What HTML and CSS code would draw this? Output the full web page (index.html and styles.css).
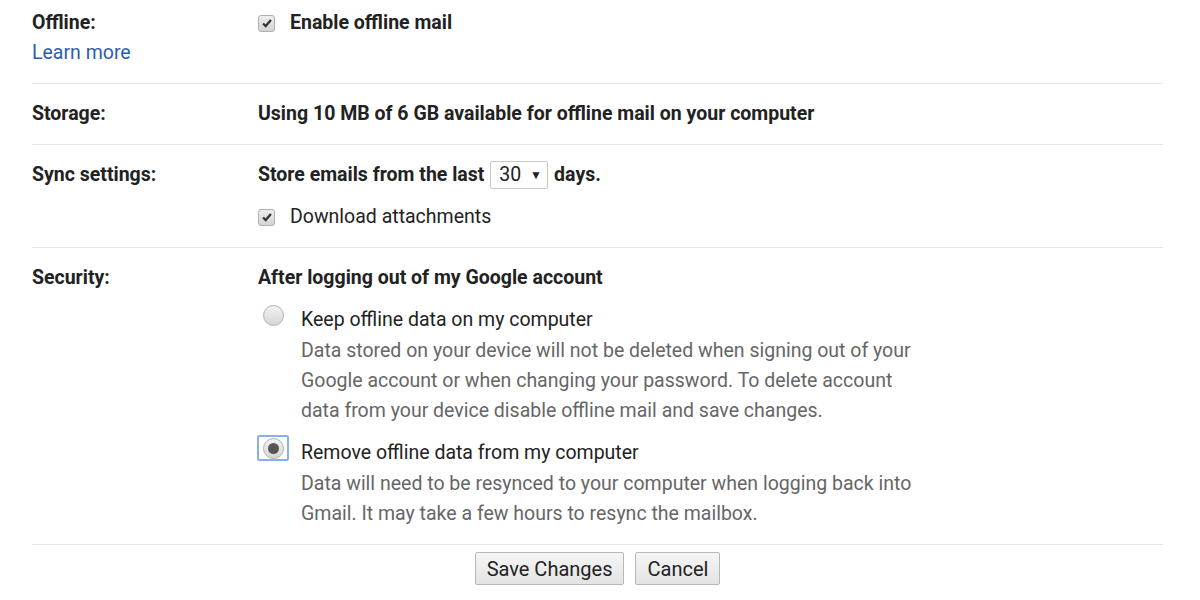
FILE: index.html
```html
<!DOCTYPE html>
<html lang="en">
<head>
    <meta charset="UTF-8">
    <meta name="viewport" content="width=device-width, initial-scale=1.0">
    <title>Offline settings</title>
    <link rel="stylesheet" href="styles.css">
</head>
<body>
    <div id="settings">
        <div class="row first">
            <div class="label">
                <div>Offline:</div>
                <a href="#" class="learn">Learn more</a>
            </div>
            <div class="value">
                <div class="check bold">
                    <span class="box"><svg viewBox="0 0 16 16" width="16" height="16"><path d="M3.5 8.5l3 3L12.5 4.5" fill="none" stroke="#333" stroke-width="2.6"/></svg></span>
                    Enable offline mail
                </div>
            </div>
        </div>

        <div class="row">
            <div class="label">Storage:</div>
            <div class="value bold">Using 10 MB of 6 GB available for offline mail on your computer</div>
        </div>

        <div class="row">
            <div class="label">Sync settings:</div>
            <div class="value">
                <div class="bold">Store emails from the last
                    <span class="select">30 <span class="arrow">&#9660;</span></span>
                    days.</div>
                <div class="check sub">
                    <span class="box"><svg viewBox="0 0 16 16" width="16" height="16"><path d="M3.5 8.5l3 3L12.5 4.5" fill="none" stroke="#333" stroke-width="2.6"/></svg></span>
                    Download attachments
                </div>
            </div>
        </div>

        <div class="row">
            <div class="label">Security:</div>
            <div class="value">
                <div class="bold">After logging out of my Google account</div>
                <div class="radio sub">
                    <span class="ring"><span class="dot"></span></span>
                    <div class="radioText">
                        <div>Keep offline data on my computer</div>
                        <div class="desc">Data stored on your device will not be deleted when signing out of your Google account or when changing your password. To delete account data from your device disable offline mail and save changes.</div>
                    </div>
                </div>
                <div class="radio sub">
                    <span class="ring focus"><span class="dot on"></span></span>
                    <div class="radioText">
                        <div>Remove offline data from my computer</div>
                        <div class="desc">Data will need to be resynced to your computer when logging back into Gmail. It may take a few hours to resync the mailbox.</div>
                    </div>
                </div>
            </div>
        </div>

        <div class="buttons">
            <button class="btn">Save Changes</button>
            <button class="btn">Cancel</button>
        </div>
    </div>
</body>
</html>
```

FILE: styles.css
```css
* {
    margin: 0;
    box-sizing: border-box;
}
body {
    background: #fff;
    font-family: Roboto, "Liberation Sans", Arial, sans-serif;
    font-size: 19.5px;
    line-height: 30px;
    color: #222;
}
#settings {
    width: 1131px;
    margin-left: 32px;
}
.row {
    display: grid;
    grid-template-columns: 226px 1fr;
    padding: 15px 0 15px 0;
    border-bottom: 1px solid #e5e5e5;
}
.row.first {
    padding-top: 8px;
    padding-bottom: 15px;
}
.label {
    font-weight: 700;
}
.learn {
    display: block;
    font-weight: 400;
    color: #2a5db0;
    text-decoration: none;
}
.bold {
    font-weight: 700;
}
.sub {
    margin-top: 12px;
}
.check {
    display: flex;
    align-items: center;
}
.box {
    width: 17px;
    height: 17px;
    border: 1px solid #b0b0b0;
    border-radius: 3px;
    background: linear-gradient(#ededed, #d4d4d4);
    margin-right: 15px;
    display: flex;
    align-items: center;
    justify-content: center;
}
.box svg {
    width: 14px;
    height: 14px;
}
.select {
    display: inline-block;
    height: 28px;
    line-height: 26px;
    width: 58px;
    padding-left: 8px;
    border: 1px solid #c8c8c8;
    border-radius: 2px;
    font-weight: 400;
    margin: 0 1px;
}
.arrow {
    font-size: 12px;
    margin-left: 4px;
    position: relative;
    top: -2px;
}
.radio {
    display: flex;
    align-items: flex-start;
}
.ring {
    width: 32px;
    height: 26px;
    margin-left: -1px;
    margin-top: -3px;
    display: flex;
    align-items: center;
    justify-content: center;
    border: 2px solid transparent;
    border-radius: 2px;
    margin-right: 12px;
}
.ring.focus {
    border-color: #8ab0ec;
}
.dot {
    width: 21px;
    height: 21px;
    border-radius: 50%;
    border: 1px solid #b0b0b0;
    background: linear-gradient(#f2f2f2, #d6d6d6);
    display: flex;
    align-items: center;
    justify-content: center;
}
.dot.on::after {
    content: "";
    width: 11px;
    height: 11px;
    border-radius: 50%;
    background: #555;
}
.radioText {
    font-weight: 400;
}
.desc {
    color: #666;
    width: 625px;
    margin-top: 1px;
}
.buttons {
    display: flex;
    justify-content: center;
    gap: 11px;
    padding-top: 7px;
}
.btn {
    font-family: Roboto, "Liberation Sans", Arial, sans-serif;
    font-size: 20px;
    color: #222;
    height: 33px;
    padding: 0 11px;
    border: 1px solid #b8b8b8;
    border-radius: 2px;
    background: linear-gradient(#f6f6f6, #e3e3e3);
}
```
